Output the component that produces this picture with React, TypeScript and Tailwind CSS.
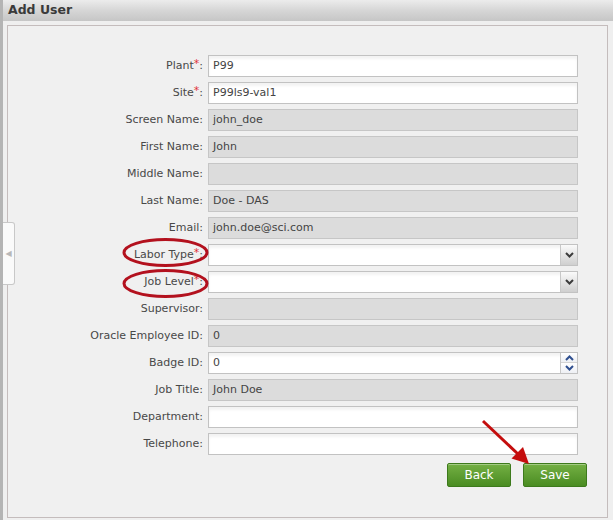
import React from 'react';

type Field = {
  label: string;
  required?: boolean;
  value?: string;
  kind: 'text' | 'disabled' | 'select' | 'spin';
};

const fields: Field[] = [
  { label: 'Plant', required: true, value: 'P99', kind: 'text' },
  { label: 'Site', required: true, value: 'P99ls9-val1', kind: 'text' },
  { label: 'Screen Name', value: 'john_doe', kind: 'disabled' },
  { label: 'First Name', value: 'John', kind: 'disabled' },
  { label: 'Middle Name', value: '', kind: 'disabled' },
  { label: 'Last Name', value: 'Doe - DAS', kind: 'disabled' },
  { label: 'Email', value: 'john.doe@sci.com', kind: 'disabled' },
  { label: 'Labor Type', required: true, kind: 'select' },
  { label: 'Job Level', required: true, kind: 'select' },
  { label: 'Supervisor', value: '', kind: 'disabled' },
  { label: 'Oracle Employee ID', value: '0', kind: 'disabled' },
  { label: 'Badge ID', value: '0', kind: 'spin' },
  { label: 'Job Title', value: 'John Doe', kind: 'disabled' },
  { label: 'Department', value: '', kind: 'text' },
  { label: 'Telephone', value: '', kind: 'text' },
];

function Chevron({ up, color }: { up?: boolean; color: string }) {
  return (
    <svg width="9" height="6" viewBox="0 0 9 6">
      <path
        d={up ? 'M1 5 L4.5 1.5 L8 5' : 'M1 1 L4.5 4.5 L8 1'}
        fill="none"
        stroke={color}
        strokeWidth="2"
      />
    </svg>
  );
}

function FieldInput({ f }: { f: Field }) {
  const base =
    'relative flex h-[22px] w-[370px] items-center border px-[4px] text-[11px] text-[#444]';
  if (f.kind === 'disabled') {
    return <div className={`${base} border-[#c6c6c6] bg-[#dcdcdc]`}>{f.value}</div>;
  }
  const white = `${base} border-[#c2c2c2] bg-white shadow-[inset_0_3px_3px_rgba(0,0,0,0.05)]`;
  if (f.kind === 'select') {
    return (
      <div className={white}>
        <div className="absolute right-0 top-0 flex h-[20px] w-[17px] items-center justify-center border-l border-[#c8c8c8] bg-gradient-to-b from-[#fafafa] to-[#cfcfcf]">
          <Chevron color="#3c3c3c" />
        </div>
      </div>
    );
  }
  if (f.kind === 'spin') {
    return (
      <div className={white}>
        {f.value}
        <div className="absolute right-0 top-0 flex h-[20px] w-[17px] flex-col border-l border-[#c8c8c8]">
          <div className="flex h-[10px] items-center justify-center border-b border-[#d4d4d4] bg-gradient-to-b from-white to-[#eef0f4]">
            <Chevron up color="#2f4f8f" />
          </div>
          <div className="flex h-[10px] items-center justify-center bg-gradient-to-b from-white to-[#eef0f4]">
            <Chevron color="#2f4f8f" />
          </div>
        </div>
      </div>
    );
  }
  return <div className={white}>{f.value}</div>;
}

function GreenButton({ label }: { label: string }) {
  return (
    <button className="flex h-[24px] w-[64px] items-center justify-center rounded-[2px] border border-[#3d7a1c] bg-gradient-to-b from-[#74b043] to-[#4a8c22] text-[12px] text-white shadow-[inset_0_1px_0_rgba(255,255,255,0.35)]">
      {label}
    </button>
  );
}

export default function App() {
  return (
    <div
      className="relative flex h-[520px] w-[613px] flex-col overflow-hidden border-l-[3px] border-[#b4b4b4] bg-[#efefef]"
      style={{ fontFamily: '"DejaVu Sans", Verdana, sans-serif' }}
    >
      {/* header */}
      <div className="flex h-[21px] items-center bg-gradient-to-b from-[#ececec] via-[#d6d6d6] to-[#c6c6c6] pl-[5px]">
        <span className="text-[12.5px] font-bold text-[#3a3a3a]">Add User</span>
      </div>

      {/* panel */}
      <div className="mb-[2px] ml-[4px] mr-[5px] mt-[4px] flex flex-1 flex-col border border-[#c4bcbc] bg-[#f0f0f0] pt-[29px]">
        <div className="flex flex-col gap-[5px]">
          {fields.map((f) => (
            <div key={f.label} className="flex items-center gap-[5px]">
              <div className="w-[195px] text-right text-[11px] text-[#484848]">
                {f.label}
                {f.required && <span className="relative top-[-2px] text-[11px] text-[#e0303a]">*</span>}
                :
              </div>
              <FieldInput f={f} />
            </div>
          ))}
        </div>
        <div className="mt-[8px] flex justify-end gap-[12px] pr-[20px]">
          <GreenButton label="Back" />
          <GreenButton label="Save" />
        </div>
      </div>

      {/* collapse tab */}
      <div className="absolute left-0 top-[222px] flex h-[63px] w-[12px] items-center justify-center rounded-r-[3px] border border-l-0 border-[#c8c8c8] bg-[#fafafa]">
        <span className="text-[8px] text-[#b8b8b8]">◀</span>
      </div>

      {/* annotations */}
      <svg className="pointer-events-none absolute left-[-3px] top-0" width="613" height="520">
        <ellipse cx="165.5" cy="252.5" rx="41.5" ry="13" fill="none" stroke="#b3111e" strokeWidth="3" />
        <ellipse cx="165.5" cy="283.5" rx="41.5" ry="13" fill="none" stroke="#b3111e" strokeWidth="3" />
        <line x1="483" y1="421" x2="518" y2="454" stroke="#c40d0d" strokeWidth="3" />
        <polygon points="529,464 511.5,458.5 523,447" fill="#c40d0d" />
      </svg>
    </div>
  );
}
